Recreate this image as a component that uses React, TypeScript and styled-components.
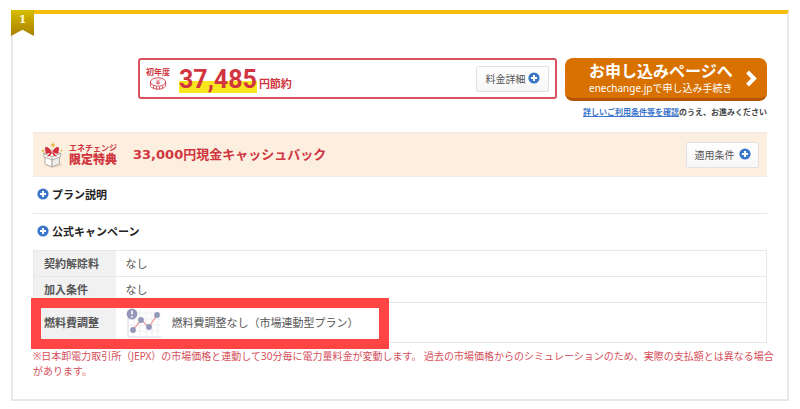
import React from "react";
import styled, { createGlobalStyle } from "styled-components";

const GlobalStyle = createGlobalStyle`
  *, *::before, *::after { box-sizing: border-box; }
  body {
    margin: 0;
    background: #fff;
    color: #555;
    font-family: "Noto Sans", "Noto Sans CJK JP", sans-serif;
    font-size: 11px;
    line-height: 16px;
  }
  button { font-family: inherit; cursor: pointer; }
`;

const Page = styled.main`
  padding: 10px 11px 8px;
`;

const Card = styled.article`
  position: relative;
  border: 2px solid #e8e8e8;
  border-top: 4px solid #f5bd0c;
  padding: 44px 20px 20px;
`;

const RankRibbon = styled.div`
  position: absolute;
  top: -4px;
  left: -2px;
  width: 23px;
  height: 26px;
  padding-top: 2px;
  background: linear-gradient(#d6bd00, #a87f00);
  clip-path: polygon(0 0, 100% 0, 100% 100%, 50% 76%, 0 100%);
  color: #fff8d8;
  font: bold 11px/16px "DejaVu Serif", serif;
  text-align: center;
`;

const Summary = styled.section`
  display: flex;
  align-items: flex-start;
  gap: 8px;
  padding-left: 105px;
`;

const PriceBox = styled.div`
  flex: 1;
  display: flex;
  align-items: center;
  height: 41px;
  padding: 0 6px;
  border: 2px solid #d9535f;
  border-radius: 3px;
  color: #d03540;
`;

const FirstYear = styled.div`
  display: flex;
  flex-direction: column;
  align-items: center;
  width: 24px;
  font-size: 8px;
  font-weight: 700;
  line-height: 10px;
`;

const Amount = styled.strong`
  display: block;
  margin: 2px 2px 0 9px;
  background: linear-gradient(transparent 52%, #f8e71c 52%);
  font: bold 25px/26px Roboto, sans-serif;
`;

const Unit = styled.span`
  padding-top: 10px;
  font-weight: 700;
`;

const DetailButton = styled.button`
  display: flex;
  align-items: center;
  justify-content: center;
  gap: ${(p: { $gap: number }) => p.$gap}px;
  width: 73px;
  height: 26px;
  margin-left: auto;
  padding: 0 0 1px;
  border: 1px solid #e1e1e1;
  border-radius: 2px;
  background: linear-gradient(#fff, #f6f6f6);
  color: #555;
  font-size: 10px;
`;

const Apply = styled.div`
  display: flex;
  flex-direction: column;
  width: 202px;
`;

const ApplyButton = styled.button`
  display: flex;
  align-items: center;
  justify-content: space-between;
  height: 43px;
  padding: 0 10px 0 24px;
  border: 0;
  border-bottom: 3px solid #b55400;
  border-radius: 8px;
  background: #d97100;
  color: #fff;
  text-align: left;
`;

const ApplyText = styled.span`
  display: flex;
  flex-direction: column;
  font-size: 10px;
  line-height: 15px;
  white-space: nowrap;

  strong {
    font-size: 16px;
    line-height: 20px;
  }
`;

const Terms = styled.p`
  margin: 4px 0 0;
  color: #444;
  font-size: 8px;
  font-weight: 700;
  line-height: 14px;
  text-align: right;
  white-space: nowrap;

  a { color: #3c76cb; }
`;

const Bonus = styled.section`
  display: flex;
  align-items: center;
  height: 45px;
  margin-top: 13px;
  padding: 0 8px;
  border: solid #efeae5;
  border-width: 1px 0;
  background: #fcefdf;
  color: #d03540;
`;

const BonusLabel = styled.div`
  margin: 0 16px 0 6px;
  font-size: 8px;
  font-weight: 700;
  line-height: 10px;

  strong {
    display: block;
    font-size: 12px;
    line-height: 14px;
  }
`;

const BonusTitle = styled.h2`
  margin: 0;
  font-family: "DejaVu Sans", "Noto Sans CJK JP", sans-serif;
  font-size: 13px;
  line-height: 20px;
`;

const Expander = styled.button`
  display: flex;
  align-items: center;
  gap: 3px;
  width: 100%;
  height: 36px;
  padding: 0 4px 2px;
  border: 0;
  background: none;
  color: #222;
  font-size: 11px;
  font-weight: 700;

  & + & {
    height: 37px;
    border-top: 1px solid #e8e8e8;
  }
`;

const TableArea = styled.div`
  position: relative;
`;

const Details = styled.table`
  width: 100%;
  border-collapse: collapse;
  font-size: 11px;

  th, td {
    height: 26px;
    padding: 0 10px;
    border: 1px solid #e8e8e8;
    text-align: left;
  }
  th {
    width: 82px;
    border-right: 0;
    background: #f1f1f1;
    color: #555;
    font-weight: 700;
    white-space: nowrap;
  }
  td { border-left: 0; }
  tr:last-child > * { height: 40px; }
`;

const PlanType = styled.div`
  display: flex;
  align-items: center;
  gap: 10px;
`;

const Highlight = styled.div`
  position: absolute;
  left: -2px;
  bottom: -6px;
  width: 358px;
  height: 51px;
  border: 10px solid #ff4444;
  pointer-events: none;
`;

const Note = styled.p`
  margin: 6px -14px 0 0;
  color: #d5505a;
  font-size: 10px;
  line-height: 15px;
`;

const PlusIcon = () => (
  <svg width="12" height="12" viewBox="0 0 12 12" aria-hidden="true">
    <circle cx="6" cy="6" r="5.6" fill="#3c76cb" />
    <path d="M6 3v6M3 6h6" stroke="#fff" strokeWidth="2" />
  </svg>
);

const CoinIcon = () => (
  <svg width="18" height="13" viewBox="0 0 18 13" fill="none" stroke="#d34a54" aria-hidden="true">
    <ellipse cx="9" cy="5" rx="7.6" ry="4.2" />
    <path d="M1.4 5v3c0 2.4 3.4 4.2 7.6 4.2s7.6-1.8 7.6-4.2V5M4.5 9.3v1.8M7.5 10v2M10.5 10v2M13.5 9.3v1.8" />
    <path d="M7 2.4l2 2.2 2-2.2M9 4.6v3M7.2 5.2h3.6M7.2 6.5h3.6" strokeWidth=".8" />
  </svg>
);

const ArrowIcon = () => (
  <svg width="12" height="17" viewBox="0 0 12 17" fill="none" aria-hidden="true">
    <path d="M2.5 2l6.5 6.5L2.5 15" stroke="#fff" strokeWidth="4" />
  </svg>
);

const GiftIcon = () => (
  <svg width="22" height="26" viewBox="0 0 22 26" aria-hidden="true">
    <ellipse cx="13" cy="23" rx="8" ry="2.5" fill="#eadbca" />
    <g stroke="#a69b93" strokeWidth=".8" strokeLinejoin="round">
      <path d="M4 14l7 3v8l-7-3z" fill="#fff" />
      <path d="M18.5 14L11 17v8l7.5-3z" fill="#efedeb" />
      <path d="M2.5 11.5L11 8l9 3.5-.5 3.2L11 18l-8-3.3z" fill="#fff" />
      <path d="M2.5 11.5l8.5 3.3 9-3.3M11 14.8V18" fill="none" />
    </g>
    <path d="M11 10.5C8 4 3.500 4 4 7L5 12zM11 10.500c3-6.500 7.500-6.500 7-3.500L17 12zM10 10l-4 4.500 3-.5 2-3 2 3 3 .5-4-4.500z" fill="#d32e3b" />
    <path d="M12 0l.9 2.3L15 3l-2.1.8L12 6l-.9-2.2L9 3l2.1-.7zM2 7l.6 1.400L4 9l-1.400.6L2 11l-.6-1.400L0 9l1.400-.6zM20.500 7l.4 1 1 .5-1 .5-.4 1-.4-1-1-.5 1-.5z" fill="#eeb13d" />
  </svg>
);

const ChartIcon = () => (
  <svg width="36" height="30" viewBox="0 0 36 30" fill="none" aria-hidden="true">
    <path d="M8 2v26M14 2v26M20 2v26M26 2v26M32 2v26M2 5h33M2 11h33M2 17h33M2 23h33" stroke="#efeff4" />
    <path d="M2 10v19h33" stroke="#d5d4e2" />
    <path d="M7 22l8-10 8 7 8-12" stroke="#efa5a5" strokeWidth="1.4" />
    <g fill="#9497b9">
      <circle cx="7" cy="22" r="2.9" />
      <circle cx="15" cy="12" r="2.9" />
      <circle cx="23" cy="19" r="2.9" />
      <circle cx="31" cy="7" r="2.9" />
      <circle cx="6" cy="6" r="5.4" />
    </g>
    <path d="M6 2.5v4M6 8v1.6" stroke="#fff" strokeWidth="1.6" />
  </svg>
);

export default function App() {
  return (
    <>
      <GlobalStyle />
      <Page lang="ja">
        <Card>
          <RankRibbon>1</RankRibbon>
          <Summary>
            <PriceBox>
              <FirstYear>
                初年度
                <CoinIcon />
              </FirstYear>
              <Amount>37,485</Amount>
              <Unit>円節約</Unit>
              <DetailButton type="button" $gap={2}>
                料金詳細
                <PlusIcon />
              </DetailButton>
            </PriceBox>
            <Apply>
              <ApplyButton type="button">
                <ApplyText>
                  <strong>お申し込みページへ</strong>
                  <span>enechange.jpで申し込み手続き</span>
                </ApplyText>
                <ArrowIcon />
              </ApplyButton>
              <Terms>
                <a href="#terms">詳しいご利用条件等を確認</a>のうえ、お進みください
              </Terms>
            </Apply>
          </Summary>

          <Bonus>
            <GiftIcon />
            <BonusLabel>
              エネチェンジ<strong>限定特典</strong>
            </BonusLabel>
            <BonusTitle>33,000円現金キャッシュバック</BonusTitle>
            <DetailButton type="button" $gap={4}>
              適用条件
              <PlusIcon />
            </DetailButton>
          </Bonus>

          <Expander type="button">
            <PlusIcon />
            プラン説明
          </Expander>
          <Expander type="button">
            <PlusIcon />
            公式キャンペーン
          </Expander>

          <TableArea>
            <Details>
              <tbody>
                <tr>
                  <th scope="row">契約解除料</th>
                  <td>なし</td>
                </tr>
                <tr>
                  <th scope="row">加入条件</th>
                  <td>なし</td>
                </tr>
                <tr>
                  <th scope="row">燃料費調整</th>
                  <td>
                    <PlanType>
                      <ChartIcon />
                      燃料費調整なし（市場連動型プラン）
                    </PlanType>
                  </td>
                </tr>
              </tbody>
            </Details>
            <Highlight />
          </TableArea>

          <Note>
            ※日本卸電力取引所（JEPX）の市場価格と連動して30分毎に電力量料金が変動します。
            過去の市場価格からのシミュレーションのため、実際の支払額とは異なる場合があります。
          </Note>
        </Card>
      </Page>
    </>
  );
}
